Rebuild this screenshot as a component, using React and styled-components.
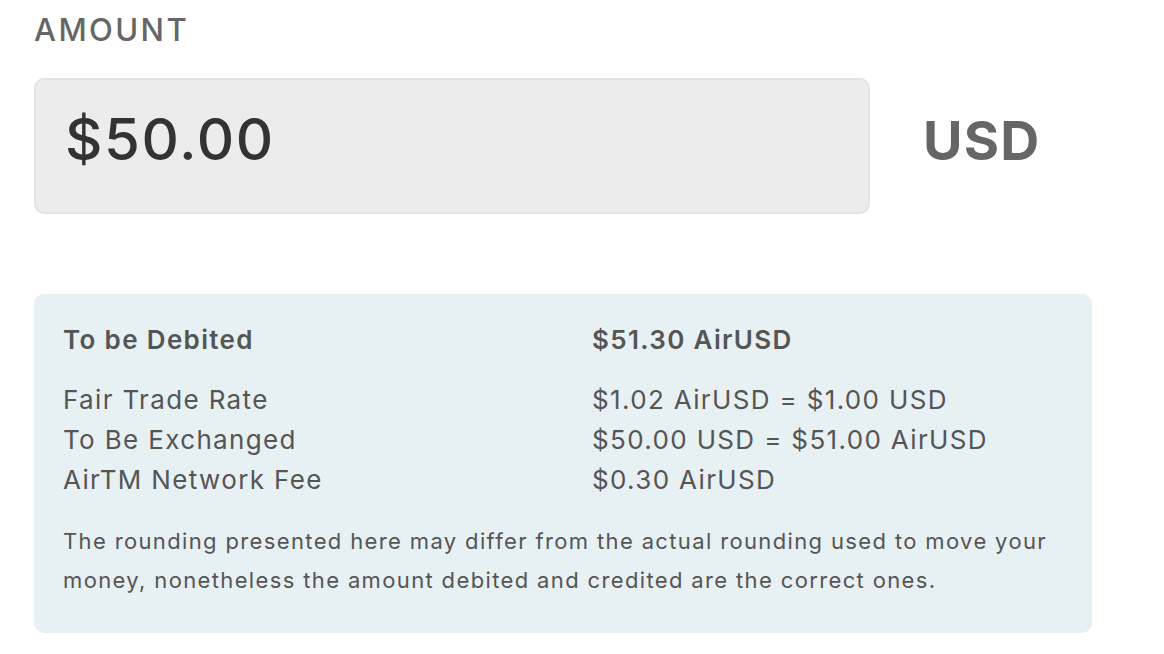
import React from 'react';
import styled, { createGlobalStyle } from 'styled-components';

const GlobalStyle = createGlobalStyle`
  body {
    margin: 0;
    background: #ffffff;
    font-family: Inter, "Noto Sans", sans-serif;
  }
`;

const Page = styled.main`
  padding: 12px 0 0 34px;
  width: 1058px;
`;

const Label = styled.div`
  font-size: 31px;
  line-height: 36px;
  font-weight: 500;
  letter-spacing: 2.4px;
  color: #666666;
`;

const AmountRow = styled.div`
  display: flex;
  align-items: center;
  margin-top: 30px;
`;

const AmountInput = styled.div`
  box-sizing: border-box;
  width: 836px;
  height: 136px;
  padding: 0 0 14px 29px;
  display: flex;
  align-items: center;
  background: #ececec;
  border: 2px solid #e3e3e3;
  border-radius: 10px;
  font-size: 58px;
  font-weight: 500;
  letter-spacing: 1.6px;
  color: #333333;
`;

const Currency = styled.div`
  margin-left: 53px;
  padding-bottom: 12px;
  font-size: 54px;
  font-weight: 700;
  letter-spacing: 1.2px;
  color: #666666;
`;

const Summary = styled.section`
  margin-top: 80px;
  padding: 26px 29px 33px;
  background: #e7f0f3;
  border-radius: 10px;
  color: #555555;
`;

const Grid = styled.div`
  display: grid;
  grid-template-columns: 529px 1fr;
  font-size: 26px;
  line-height: 40px;
  letter-spacing: 1.35px;
  margin-bottom: ${p => (p.$gap ? '20px' : '0')};
  font-weight: ${p => (p.$strong ? 600 : 400)};
`;

const Note = styled.p`
  margin: 22px 0 0;
  font-size: 22px;
  line-height: 39px;
  letter-spacing: 1.36px;
  color: #555555;
`;

const rows = [
  ['Fair Trade Rate', '$1.02 AirUSD = $1.00 USD'],
  ['To Be Exchanged', '$50.00 USD = $51.00 AirUSD'],
  ['AirTM Network Fee', '$0.30 AirUSD'],
];

export default function App() {
  return (
    <>
      <GlobalStyle />
      <Page>
        <Label>AMOUNT</Label>
        <AmountRow>
          <AmountInput>$50.00</AmountInput>
          <Currency>USD</Currency>
        </AmountRow>
        <Summary>
          <Grid $strong $gap>
            <span>To be Debited</span>
            <span>$51.30 AirUSD</span>
          </Grid>
          <Grid>
            {rows.map(([k, v]) => (
              <React.Fragment key={k}>
                <span>{k}</span>
                <span>{v}</span>
              </React.Fragment>
            ))}
          </Grid>
          <Note>
            The rounding presented here may differ from the actual rounding used to move your
            money, nonetheless the amount debited and credited are the correct ones.
          </Note>
        </Summary>
      </Page>
    </>
  );
}
